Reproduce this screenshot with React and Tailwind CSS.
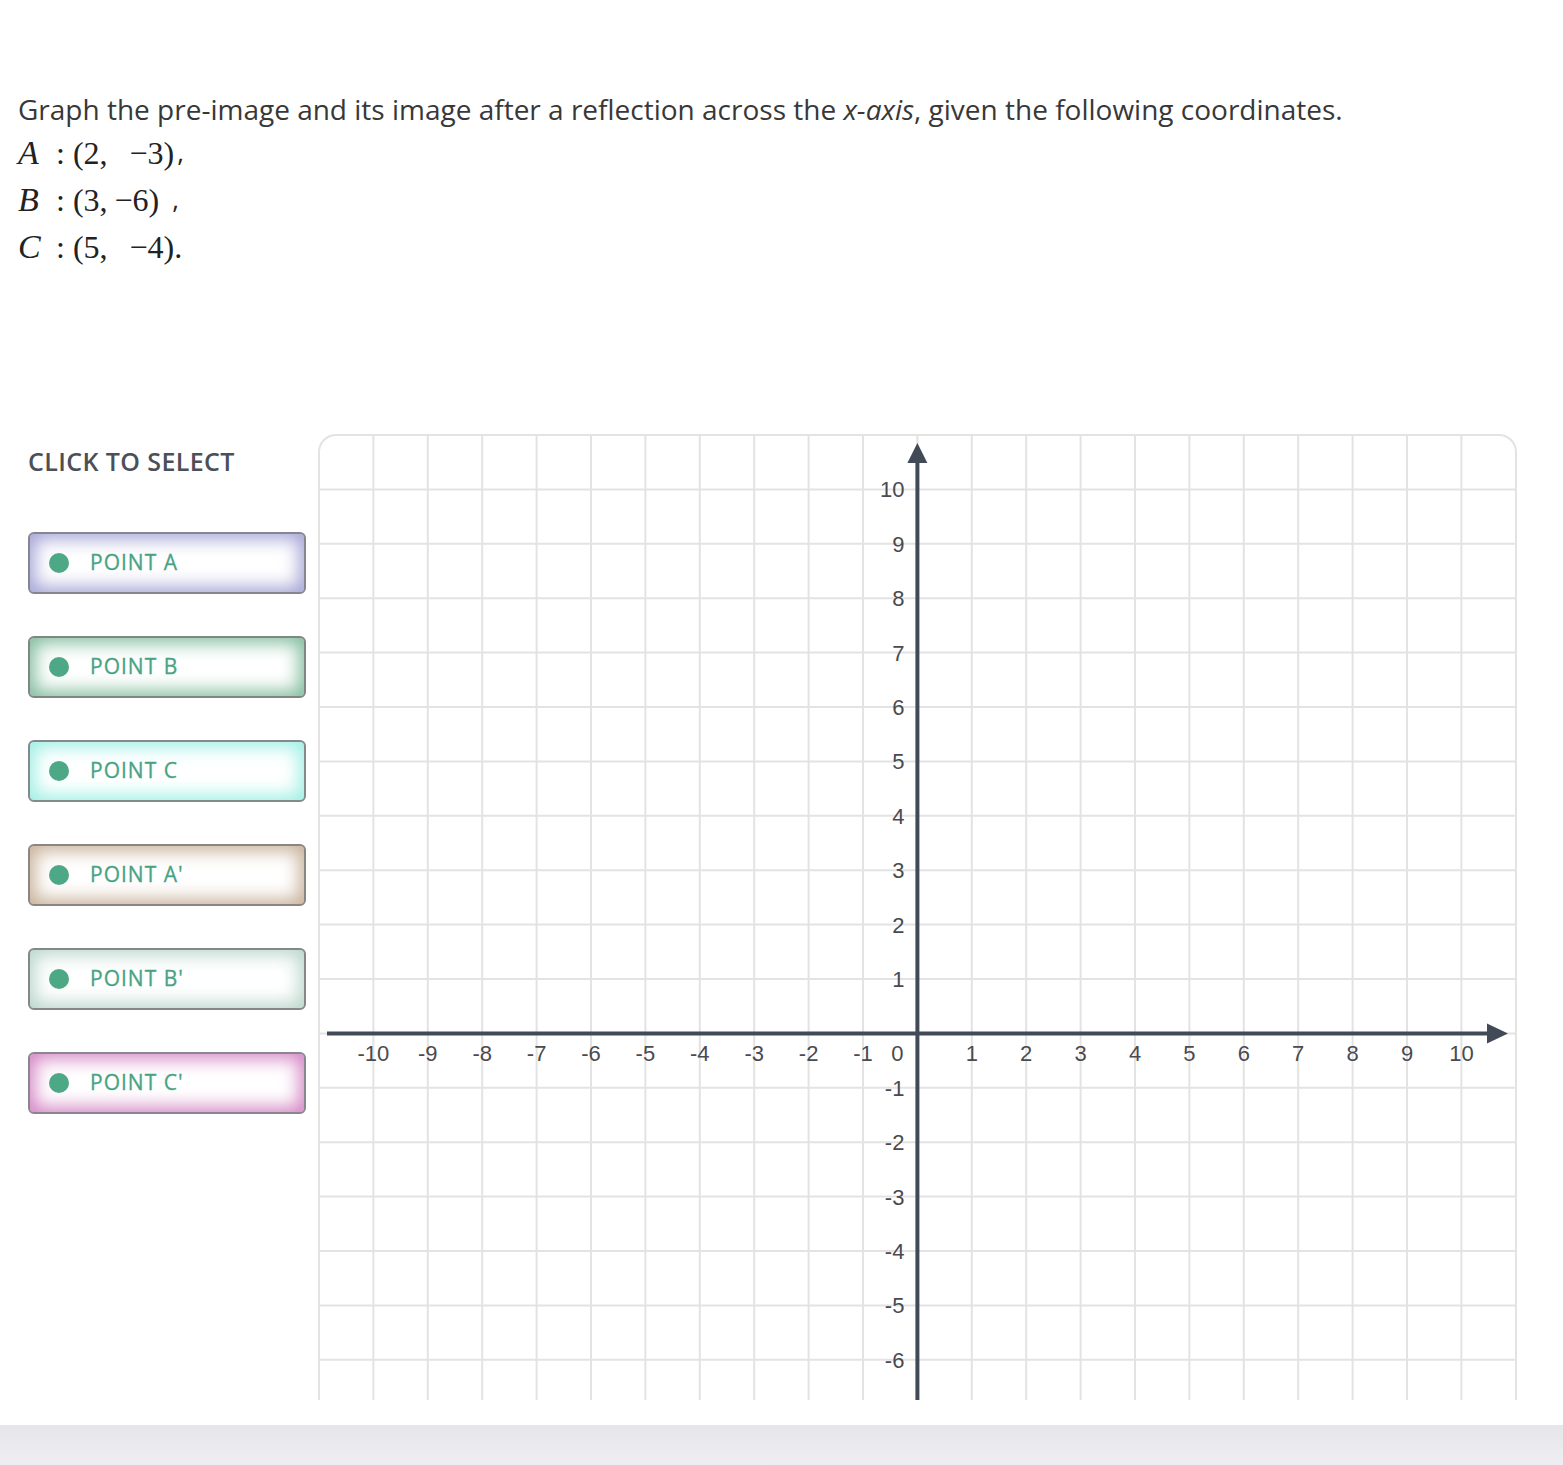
import React from "react";

const U = 54.4;
const O = -1 + 11 * U; // origin in svg coords

function Graph() {
  const lines = [];
  for (let k = 1; k < 22; k++) {
    const p = -1 + k * U;
    lines.push(<line key={"v" + k} x1={p} y1={-2} x2={p} y2={970} stroke="#e3e3e3" strokeWidth="2" />);
    lines.push(<line key={"h" + k} x1={-2} y1={p} x2={1200} y2={p} stroke="#e3e3e3" strokeWidth="2" />);
  }
  const xl = [];
  for (let i = -10; i <= 10; i++) {
    if (i === 0) continue;
    xl.push(
      <text key={"x" + i} x={O + i * U} y={O + 28} textAnchor="middle" fontSize="22" fill="#4a4a4f" fontFamily="'Liberation Sans', Arial, sans-serif">
        {i}
      </text>
    );
  }
  const yl = [];
  for (let i = -6; i <= 10; i++) {
    if (i === 0) continue;
    yl.push(
      <text key={"y" + i} x={O - 13} y={O - i * U + 8} textAnchor="end" fontSize="22" fill="#4a4a4f" fontFamily="'Liberation Sans', Arial, sans-serif">
        {i}
      </text>
    );
  }
  return (
    <svg width="1195" height="964" className="block">
      {lines}
      <line x1={7} y1={O} x2={1170} y2={O} stroke="#434a57" strokeWidth="4" />
      <polygon points={`1167,${O - 10} 1188,${O} 1167,${O + 10}`} fill="#434a57" />
      <line x1={O} y1={25} x2={O} y2={970} stroke="#434a57" strokeWidth="4" />
      <polygon points={`${O - 10},27 ${O},7 ${O + 10},27`} fill="#434a57" />
      {xl}
      {yl}
      <text x={O - 20} y={O + 28} textAnchor="middle" fontSize="22" fill="#4a4a4f" fontFamily="'Liberation Sans', Arial, sans-serif">0</text>
    </svg>
  );
}

const buttons = [
  { label: "POINT A", sh: "shadow-[inset_0_0_18px_5px_#a4a4d6]", bd: "border-[#85868f]" },
  { label: "POINT B", sh: "shadow-[inset_0_0_18px_5px_#80bc9c]", bd: "border-[#7f8784]" },
  { label: "POINT C", sh: "shadow-[inset_0_0_18px_5px_#9eefe4]", bd: "border-[#838a8c]" },
  { label: "POINT A'", sh: "shadow-[inset_0_0_18px_5px_#c8b199]", bd: "border-[#8a8682]" },
  { label: "POINT B'", sh: "shadow-[inset_0_0_18px_5px_#bad6cb]", bd: "border-[#848886]" },
  { label: "POINT C'", sh: "shadow-[inset_0_0_18px_5px_#d486c4]", bd: "border-[#8a8590]" },
];

const serif = "font-['Liberation_Serif','Times_New_Roman',serif]";

function MathLine({ v, a, b, gap, tail, tailGap }) {
  return (
    <div className="flex items-center h-[47px]">
      <i className="w-[30px] text-[34px]">{v}</i>
      <span className="ml-[8px] mr-[8px]">:</span>
      <span>({a},</span>
      <span style={{ marginLeft: gap }}>−{b})</span>
      <span className={tail === "," ? "font-['Open_Sans',sans-serif] text-[26px]" : ""} style={{ marginLeft: tailGap }}>
        {tail}
      </span>
    </div>
  );
}

export default function App() {
  return (
    <div className="bg-white w-full font-['Open_Sans',sans-serif] text-[#333]">
      <div className="pl-[18px] pt-[90px]">
        <div className="text-[28px] leading-[38px] text-[#383838]">
          Graph the pre-image and its image after a reflection across the <i>x-axis</i>, given the following coordinates.
        </div>
        <div className={`${serif} text-[32px] text-[#222] mt-[1px]`}>
          <MathLine v="A" a="2" b="3" gap={22} tail="," tailGap={3} />
          <MathLine v="B" a="3" b="6" gap={7} tail="," tailGap={13} />
          <MathLine v="C" a="5" b="4" gap={22} tail="." tailGap={0} />
        </div>
      </div>

      <div className="flex mt-[164px] pl-[28px]">
        <div className="w-[278px] mr-[12px]">
          <div className="mt-[11px] text-[25px] leading-[32px] font-semibold text-[#4b4f58] tracking-[0.4px]">
            CLICK TO SELECT
          </div>
          <div className="mt-[55px] flex flex-col gap-[42px]">
            {buttons.map((b) => (
              <div
                key={b.label}
                className={`h-[62px] rounded-[6px] border-2 ${b.bd} bg-white flex items-center pl-[19px] ${b.sh}`}
              >
                <span className="w-[20px] h-[20px] rounded-full bg-[#4da886] shrink-0"></span>
                <span className="ml-[21px] text-[21px] text-[#48a383] tracking-[1px] [-webkit-text-stroke:0.3px_#48a383]">{b.label}</span>
              </div>
            ))}
          </div>
        </div>
        <div className="w-[1199px] h-[966px] border-2 border-b-0 border-[#e3e3e3] rounded-t-[18px] overflow-hidden">
          <Graph />
        </div>
      </div>

      <div className="h-[25px]"></div>
      <div className="h-[60px] bg-gradient-to-b from-[#e5e5ea] to-[#f4f4f7]"></div>
    </div>
  );
}
